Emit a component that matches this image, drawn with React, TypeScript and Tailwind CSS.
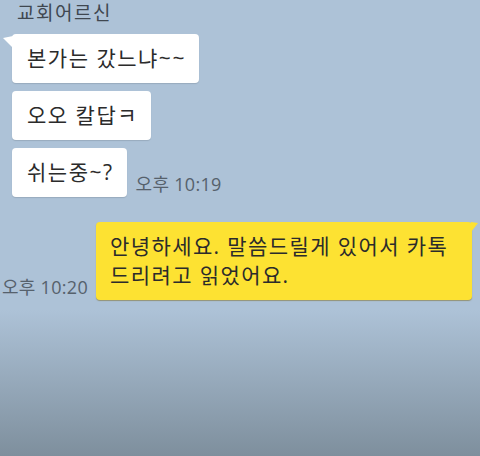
import React from "react";

const font = { fontFamily: '"Open Sans", "Noto Sans CJK KR", sans-serif' };

function LeftTail() {
  return (
    <svg className="absolute left-[-9px] top-[2px]" width="10" height="13" viewBox="0 0 10 13">
      <polygon points="10,0 0,2 10,12" fill="#ffffff" />
    </svg>
  );
}

function RightTail() {
  return (
    <svg className="absolute right-[-7px] top-0" width="8" height="11" viewBox="0 0 8 11">
      <polygon points="0,0 7,1 0,10" fill="#fde232" />
    </svg>
  );
}

function WhiteBubble({ text, tail }: { text: string; tail?: boolean }) {
  return (
    <div className="relative rounded-[4px] bg-white pl-[15px] pr-[13px] py-[10px] text-[21px] leading-[29px] tracking-[1.5px] text-[#2b2b2b] shadow-[0_1px_1px_rgba(0,0,0,0.12)] whitespace-nowrap">
      {tail && <LeftTail />}
      {text}
    </div>
  );
}

export default function App() {
  return (
    <div
      style={font}
      className="h-[456px] w-[480px] overflow-hidden bg-[linear-gradient(to_bottom,#adc2d7_0%,#adc2d7_68%,#7e8f9d_100%)]"
    >
      <div className="pl-[17px] pt-[1px] text-[19px] leading-[24px] tracking-[1.5px] text-[#3f4750]">교회어르신</div>
      <div className="mt-[9px] flex flex-col items-start gap-[8px] pl-[12px]">
        <WhiteBubble text="본가는 갔느냐~~" tail />
        <WhiteBubble text="오오 칼답ㅋ" />
        <div className="flex items-end gap-[9px]">
          <WhiteBubble text="쉬는중~?" />
          <div className="mb-[1px] text-[18px] leading-[24px] tracking-[0.3px] text-[#56616c] whitespace-nowrap">오후 10:19</div>
        </div>
      </div>
      <div className="mt-[25px] flex items-end justify-end gap-[8px] pr-[8px]">
        <div className="mb-[1px] text-[18px] leading-[24px] tracking-[0.3px] text-[#56616c] whitespace-nowrap">오후 10:20</div>
        <div className="relative w-[376px] rounded-[4px] bg-[#fde232] px-[14px] py-[10px] text-[21px] leading-[29px] tracking-[1.4px] text-[#2b2b2b] shadow-[0_1px_1px_rgba(120,100,20,0.5)] whitespace-nowrap">
          <RightTail />
          안녕하세요. 말씀드릴게 있어서 카톡
          <br />
          드리려고 읽었어요.
        </div>
      </div>
    </div>
  );
}
